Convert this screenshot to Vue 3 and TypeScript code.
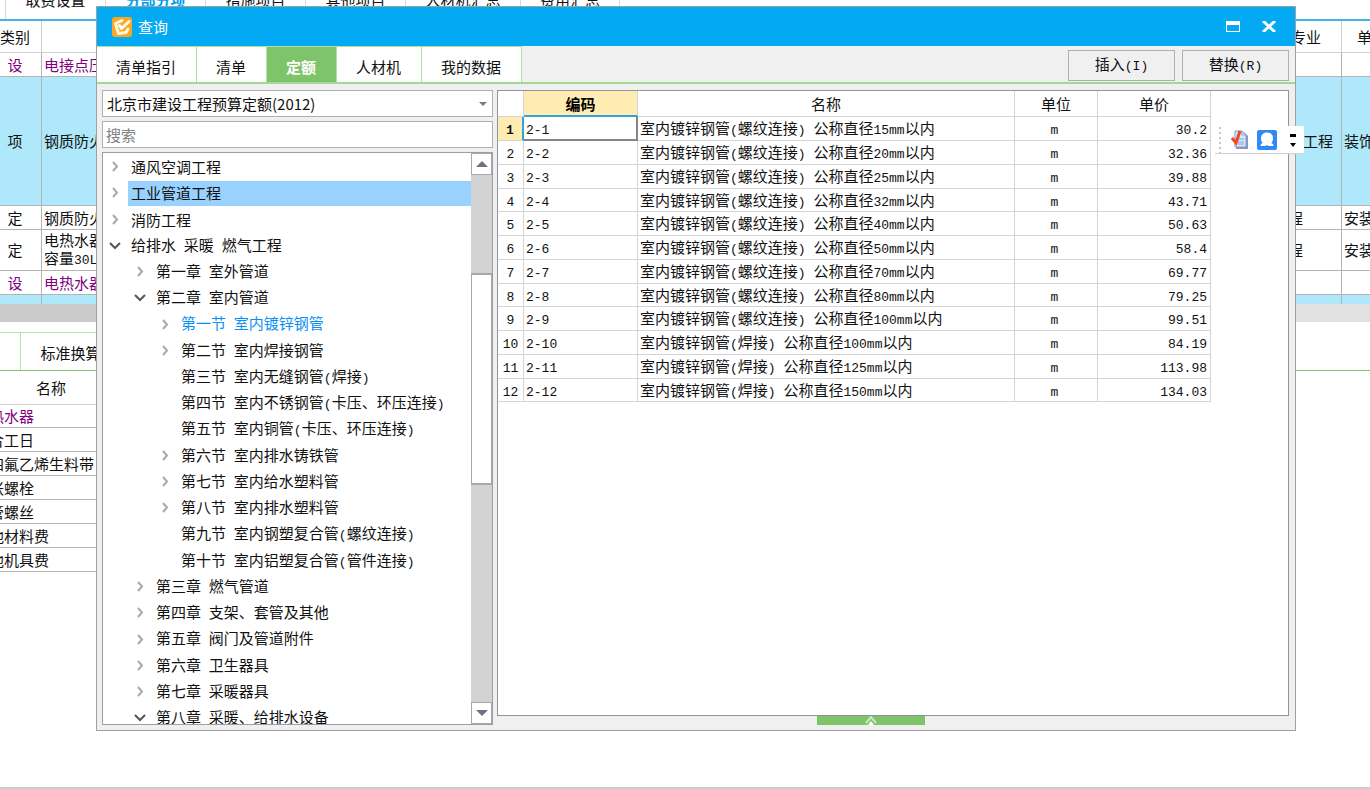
<script setup lang="ts">
import { h, ref } from 'vue'

interface TreeNode {
  label: string
  level: number
  state: 'closed' | 'open' | 'leaf'
}

interface QuotaRow {
  code: string
  name: string
  unit: string
  price: string
}

/* Sets half-width characters in a narrower monospace face than the Chinese text. */
const Mixed = (props: { text: string }) =>
  (props.text.match(/[\x20-\x7e]+|[^\x20-\x7e]+/g) ?? []).map((part) =>
    /[\x20-\x7e]/.test(part) ? h('span', { class: 'half' }, part) : part,
  )
Mixed.props = ['text']

const pageTabs = ['取费设置', '分部分项', '措施项目', '其他项目', '人材机汇总', '费用汇总']
const tabs = ['清单指引', '清单', '定额', '人材机', '我的数据']
const activeTab = ref('定额')
const keyword = ref('')
const library = ref('北京市建设工程预算定额(2012)')
const selectedNode = ref('工业管道工程')
const currentRow = ref(0)

const backRows = [
  { kind: '设', name: '电接点压', major: '', unit: '', cls: 'r24 purple' },
  { kind: '项', name: '钢质防火', major: '工程', unit: '装饰', cls: 'r129 blue' },
  { kind: '定', name: '钢质防火', major: '程', unit: '安装', cls: 'r24 short' },
  { kind: '定', name: '电热水器\n容量30L', major: '程', unit: '安装', cls: 'r41 short' },
  { kind: '设', name: '电热水器', major: '', unit: '', cls: 'r24 purple' },
  { kind: '', name: '', major: '', unit: '', cls: 'r9 blue' },
]

const materials = ['热水器', '合工日', '四氟乙烯生料带', '胀螺栓', '管螺丝', '他材料费', '他机具费']

const nodes: TreeNode[] = [
  { label: '通风空调工程', level: 0, state: 'closed' },
  { label: '工业管道工程', level: 0, state: 'closed' },
  { label: '消防工程', level: 0, state: 'closed' },
  { label: '给排水 采暖 燃气工程', level: 0, state: 'open' },
  { label: '第一章 室外管道', level: 1, state: 'closed' },
  { label: '第二章 室内管道', level: 1, state: 'open' },
  { label: '第一节 室内镀锌钢管', level: 2, state: 'closed' },
  { label: '第二节 室内焊接钢管', level: 2, state: 'closed' },
  { label: '第三节 室内无缝钢管(焊接)', level: 2, state: 'leaf' },
  { label: '第四节 室内不锈钢管(卡压、环压连接)', level: 2, state: 'leaf' },
  { label: '第五节 室内铜管(卡压、环压连接)', level: 2, state: 'leaf' },
  { label: '第六节 室内排水铸铁管', level: 2, state: 'closed' },
  { label: '第七节 室内给水塑料管', level: 2, state: 'closed' },
  { label: '第八节 室内排水塑料管', level: 2, state: 'closed' },
  { label: '第九节 室内钢塑复合管(螺纹连接)', level: 2, state: 'leaf' },
  { label: '第十节 室内铝塑复合管(管件连接)', level: 2, state: 'leaf' },
  { label: '第三章 燃气管道', level: 1, state: 'closed' },
  { label: '第四章 支架、套管及其他', level: 1, state: 'closed' },
  { label: '第五章 阀门及管道附件', level: 1, state: 'closed' },
  { label: '第六章 卫生器具', level: 1, state: 'closed' },
  { label: '第七章 采暖器具', level: 1, state: 'closed' },
  { label: '第八章 采暖、给排水设备', level: 1, state: 'open' },
]

const threaded = [
  ['15', '30.2'], ['20', '32.36'], ['25', '39.88'], ['32', '43.71'], ['40', '50.63'],
  ['50', '58.4'], ['70', '69.77'], ['80', '79.25'], ['100', '99.51'],
]
const welded = [['100', '84.19'], ['125', '113.98'], ['150', '134.03']]

const rows: QuotaRow[] = [
  ...threaded.map(([d, price]) => ({ name: `室内镀锌钢管(螺纹连接) 公称直径${d}mm以内`, price })),
  ...welded.map(([d, price]) => ({ name: `室内镀锌钢管(焊接) 公称直径${d}mm以内`, price })),
].map((row, i) => ({ code: `2-${i + 1}`, unit: 'm', ...row }))
</script>

<template>
  <div class="page">
    <nav class="page-tabs">
      <button v-for="t in pageTabs" :key="t" type="button" :class="{ on: t === '分部分项' }">{{ t }}</button>
    </nav>

    <table class="back-table">
      <colgroup>
        <col class="c-kind" /><col /><col class="c-major" /><col class="c-unit" />
      </colgroup>
      <thead>
        <tr><th class="kind">类别</th><th></th><th class="major">专业</th><th class="unit">单</th></tr>
      </thead>
      <tbody>
        <tr v-for="(r, i) in backRows" :key="i" :class="r.cls">
          <td class="kind">{{ r.kind }}</td>
          <td class="name"><Mixed :text="r.name" /></td>
          <td class="major">{{ r.major }}</td>
          <td class="unit">{{ r.unit }}</td>
        </tr>
      </tbody>
    </table>
    <div class="splitter"><div class="splitter-left"></div></div>

    <div class="sub-tabs"><div class="sub-left"><button type="button">标准换算</button></div></div>
    <table class="materials">
      <thead><tr><th>名称</th></tr></thead>
      <tbody>
        <tr v-for="(m, i) in materials" :key="m" :class="{ purple: i === 0 }"><td>{{ m }}</td></tr>
      </tbody>
    </table>
    <div class="page-foot"></div>

    <section class="dialog" role="dialog" aria-label="查询">
      <header class="title-bar">
        <svg class="logo" viewBox="0 0 20 20" aria-hidden="true">
          <rect width="20" height="20" rx="3" fill="#f9a825" />
          <path d="M10 3.500 3.500 6.500 6.500 16.500 14 15.500 16 12" fill="none" stroke="#fff6e0" stroke-width="3" stroke-linejoin="round" stroke-linecap="round" />
          <path d="M8 11 17 3.500" fill="none" stroke="#f9a825" stroke-width="5" />
          <path d="M7.500 8.500 9.500 11.500 17 4.500" fill="none" stroke="#fffdf5" stroke-width="3" stroke-linejoin="round" stroke-linecap="round" />
        </svg>
        <h1>查询</h1>
        <button type="button" aria-label="最大化">
          <svg width="14" height="11" viewBox="0 0 14 11"><path d="M0 0h14v11H0zM1 4v6h12V4z" fill="#fff" fill-rule="evenodd" /></svg>
        </button>
        <button type="button" aria-label="关闭">
          <svg width="14" height="11" viewBox="0 0 14 11"><path d="M1 0 13 11M13 0 1 11" stroke="#fff" stroke-width="3" /></svg>
        </button>
      </header>

      <div class="tool-row">
        <nav class="tabs">
          <button v-for="t in tabs" :key="t" type="button" :class="{ on: t === activeTab }" @click="activeTab = t">{{ t }}</button>
        </nav>
        <div class="actions">
          <button type="button"><Mixed text="插入(I)" /></button>
          <button type="button"><Mixed text="替换(R)" /></button>
        </div>
      </div>

      <div class="body">
        <div class="left">
          <div class="library">
            <select v-model="library" aria-label="定额库">
              <option>北京市建设工程预算定额(2012)</option>
            </select>
            <svg width="8" height="4" viewBox="0 0 8 4" aria-hidden="true"><path d="M0 0h8L4 4z" fill="#777a8c" /></svg>
          </div>
          <input v-model="keyword" class="search" type="text" placeholder="搜索" aria-label="搜索" />
          <div class="tree-box">
            <ul class="tree">
              <li v-for="n in nodes" :key="n.label" :class="['lv' + n.level, n.state]">
                <svg class="arrow" width="12" height="12" viewBox="0 0 12 12" aria-hidden="true">
                  <path v-if="n.state === 'closed'" d="M4 1 8 5.500 4 10" fill="none" stroke="#a9a9a9" stroke-width="2" />
                  <path v-if="n.state === 'open'" d="M1 3 6 8 11 3" fill="none" stroke="#555" stroke-width="2" />
                </svg>
                <button
                  type="button"
                  :class="{ selected: n.label === selectedNode, link: n.label === '第一节 室内镀锌钢管' }"
                  @click="selectedNode = n.label"
                ><Mixed :text="n.label" /></button>
              </li>
            </ul>
            <div class="scrollbar">
              <button type="button" aria-label="向上滚动"><svg width="12" height="6" viewBox="0 0 12 6"><path d="M6 0 12 6H0z" fill="#6f7284" /></svg></button>
              <div class="track before"></div>
              <div class="thumb"></div>
              <div class="track after"></div>
              <button type="button" aria-label="向下滚动"><svg width="12" height="6" viewBox="0 0 12 6"><path d="M0 0h12L6 6z" fill="#6f7284" /></svg></button>
            </div>
          </div>
        </div>

        <div class="right">
          <div class="grid-box">
            <table class="grid">
              <colgroup>
                <col class="g-no" /><col class="g-code" /><col class="g-name" /><col class="g-unit" /><col class="g-price" />
              </colgroup>
              <thead>
                <tr><th></th><th class="hot">编码</th><th>名称</th><th>单位</th><th>单价</th></tr>
              </thead>
              <tbody>
                <tr v-for="(r, i) in rows" :key="r.code" :class="{ current: i === currentRow }" @click="currentRow = i">
                  <td class="no"><Mixed :text="String(i + 1)" /></td>
                  <td class="code"><Mixed :text="r.code" /></td>
                  <td><Mixed :text="r.name" /></td>
                  <td class="mid"><Mixed :text="r.unit" /></td>
                  <td class="num"><Mixed :text="r.price" /></td>
                </tr>
              </tbody>
            </table>
          </div>
          <button class="handle" type="button" aria-label="展开">
            <svg width="12" height="9" viewBox="0 0 12 9"><path d="M1 7 6 1l5 6" fill="none" stroke="#c9e8bf" stroke-width="2" /><path d="M6 5 9 9H3z" fill="#fff" /></svg>
          </button>
        </div>
      </div>
    </section>

    <div class="float-bar">
      <span class="grip"></span>
      <button type="button" aria-label="检查">
        <svg width="18" height="20" viewBox="0 0 18 20">
          <path d="M5 2h8l4 4v13H5z" fill="#8f93b8" />
          <path d="M4 1h7l4 4v12H4z" fill="#d5e8fb" stroke="#7d9fd0" />
          <path d="M11 1v4h4M7 9h6M7 12h6M7 14h6" fill="none" stroke="#7fa8dc" />
          <path d="M1 8 5 13 9 1" fill="none" stroke="#f4471c" stroke-width="3" />
        </svg>
      </button>
      <button type="button" aria-label="用户">
        <svg width="20" height="20" viewBox="0 0 20 20">
          <rect width="20" height="20" rx="2" fill="#2f8bf3" />
          <path d="M10 2.500c4 0 6 2.500 6 6 0 2-.8 3.500-1.800 4.500 1.800.5 2.300 1.500 2.300 3h-5l-1.500-1-1.500 1h-5c0-1.500.5-2.500 2.300-3C4.800 12 4 10.500 4 8.500c0-3.500 2-6 6-6z" fill="#fff" />
        </svg>
      </button>
      <button class="more" type="button" aria-label="更多">
        <svg width="6" height="14" viewBox="0 0 6 14"><path d="M0 1h6v3H0zM0 10h6l-3 4z" fill="#000" /></svg>
      </button>
    </div>
  </div>
</template>

<style>
body {
  margin: 0;
  overflow: hidden;
}
.half {
  font-family: "Liberation Mono", monospace;
  font-size: 13px;
  white-space: pre;
}
</style>

<style scoped>
.page {
  position: relative;
  display: flex;
  flex-direction: column;
  min-height: 100vh;
  overflow: hidden;
  background: #fff;
  color: #111;
  font: 15px/18px "Noto Sans CJK SC", sans-serif;
}
.page *,
.page *::before {
  box-sizing: border-box;
}
button,
select,
input {
  margin: 0;
  padding: 0;
  border: 0;
  border-radius: 0;
  background: none;
  color: inherit;
  font: inherit;
}
button svg {
  display: block;
}
table {
  border-collapse: separate;
  border-spacing: 0;
  table-layout: fixed;
}
th,
td {
  padding: 0;
  font-weight: 400;
  white-space: pre;
  overflow: hidden;
}

/* page behind the dialog */
.page-tabs {
  display: flex;
  height: 42px;
  margin-top: -21px;
  padding-left: 5px;
  border-bottom: 2px solid #41b6e6;
}
.page-tabs button {
  width: 100px;
  padding-top: 2px;
  border-left: 1px solid #d8d8d8;
}
.page-tabs button:nth-child(5) {
  width: 115px;
}
.page-tabs button:last-child {
  border-right: 1px solid #d8d8d8;
}
.page-tabs .on {
  color: #03a0ea;
  font-weight: 700;
}
.back-table {
  width: 100%;
}
.c-kind {
  width: 42px;
}
.c-major {
  width: 99px;
}
.c-unit {
  width: 28px;
}
.back-table th,
.back-table td {
  border-right: 1px solid #b4b4b4;
  border-bottom: 1px solid #b4b4b4;
}
.back-table tr > :last-child {
  border-right: 0;
}
.back-table th {
  height: 32px;
  border-color: #d0d0d0;
}
.back-table .kind {
  padding-right: 11px;
  text-align: center;
}
.back-table .name {
  padding-left: 2px;
}
.back-table .major {
  padding-right: 8px;
  text-align: right;
}
.back-table th.major {
  padding-right: 20px;
}
.back-table .short .major {
  padding-right: 38px;
}
.back-table .unit {
  padding-left: 2px;
}
.back-table th.unit {
  padding-left: 15px;
  text-align: left;
}
.r24 td {
  height: 24px;
}
.r41 td {
  height: 41px;
}
.r129 td {
  height: 129px;
}
.r9 td {
  height: 9px;
  border-bottom: 0;
}
.blue td {
  background: #aee8fa;
}
.purple td {
  color: #800080;
}
.splitter {
  height: 18px;
  background: #e1e1e1;
}
.splitter-left {
  width: 97px;
  height: 100%;
  background: #cbcbcb;
}
.sub-tabs {
  height: 49px;
  padding-top: 10px;
  border-bottom: 1px solid #7cc96c;
}
.sub-left {
  width: 97px;
  height: 100%;
  padding-left: 20px;
  overflow: hidden;
  border-top: 1px solid #b5e3a8;
}
.sub-left button {
  width: 100px;
  height: 100%;
  padding-top: 2px;
  border-left: 1px solid #b5e3a8;
}
.materials {
  width: 97px;
}
.materials th {
  height: 34px;
  padding-left: 5px;
  border-bottom: 1px solid #d0d0d0;
}
.materials td {
  height: 24px;
  border-bottom: 1px solid #b4b4b4;
  text-indent: -11px;
}
.materials tr:first-child td {
  height: 23px;
}
.page-foot {
  height: 2px;
  margin-top: auto;
  background: #ccc;
}

/* dialog window */
.dialog {
  position: absolute;
  inset: 6px 74px 58px 96px;
  display: flex;
  flex-direction: column;
  border: 1px solid #a0a0a0;
  background: #f0f0f0;
}
.title-bar {
  display: flex;
  align-items: center;
  height: 39px;
  padding: 0 8px 0 15px;
  background: #03a9f2;
  color: #fff;
}
.logo {
  width: 20px;
  height: 20px;
}
.title-bar h1 {
  flex: 1;
  margin: 0 0 0 6px;
  font-size: 15px;
  font-weight: 400;
}
.title-bar button {
  display: flex;
  align-items: center;
  justify-content: center;
  width: 36px;
  height: 39px;
}
.tool-row {
  display: flex;
  justify-content: space-between;
  height: 38px;
  border-bottom: 2px solid #a2d893;
}
.tabs {
  display: flex;
}
.tabs button {
  padding: 5px 20px 0 19px;
  border-top: 1px solid #b0e0a3;
  border-right: 1px solid #b0e0a3;
  background: #fff;
}
.tabs .on {
  background: #7fc36a;
  color: #fff;
  font-weight: 700;
}
.actions {
  display: flex;
  gap: 7px;
  padding: 4px 6px 0 0;
}
.actions button {
  width: 107px;
  height: 31px;
  border: 1px solid #b0b0b0;
}
.body {
  display: flex;
  flex: 1;
  gap: 4px;
  min-height: 0;
  padding: 6px 6px 5px 5px;
}
.left {
  display: flex;
  flex-direction: column;
  gap: 4px;
  width: 391px;
}
.library {
  position: relative;
}
.library select {
  display: block;
  width: 100%;
  height: 27px;
  padding-left: 4px;
  border: 1px solid #b0b0b0;
  background: #fff;
  appearance: none;
}
.library svg {
  position: absolute;
  top: 12px;
  right: 6px;
  pointer-events: none;
}
.search {
  width: 100%;
  height: 27px;
  padding-left: 3px;
  border: 1px solid #b0b0b0;
  background: #fff;
}
.search::placeholder {
  color: #808080;
  opacity: 1;
}
.tree-box {
  display: flex;
  flex: 1;
  min-height: 0;
  overflow: hidden;
  border: 1px solid #9a9ea8;
  background: #fff;
}
.tree {
  flex: 1;
  margin: 0;
  padding: 1px 0 0;
  list-style: none;
}
.tree li {
  display: flex;
  align-items: center;
  height: 26px;
  padding-left: 6px;
}
.tree li:nth-child(4n + 3) {
  height: 27px;
}
.tree .lv1 {
  padding-left: 31px;
}
.tree .lv2 {
  padding-left: 56px;
}
.arrow {
  margin-right: 7px;
}
.tree button {
  flex: 1;
  height: 25px;
  padding-left: 3px;
  text-align: left;
  white-space: nowrap;
}
.tree .selected {
  background: #99d1ff;
}
.tree .link {
  color: #0a90f5;
}
.scrollbar {
  display: flex;
  flex-direction: column;
  width: 21px;
}
.scrollbar button {
  display: flex;
  align-items: center;
  justify-content: center;
  height: 22px;
  border: 1px solid #a8a8a8;
  background: #fff;
}
.track {
  background: #d3d3d3;
}
.before {
  flex: 99;
}
.thumb {
  flex: 209;
  border: 1px solid #a8a8a8;
  border-top-width: 2px;
  border-bottom-width: 2px;
}
.after {
  flex: 218;
}
.right {
  display: flex;
  flex: 1;
  flex-direction: column;
  min-width: 0;
}
.grid-box {
  flex: 1;
  overflow: hidden;
  border: 1px solid #8f949e;
  background: #fff;
}
.grid {
  width: 713px;
}
.g-no {
  width: 26px;
}
.g-code {
  width: 114px;
}
.g-name {
  width: 377px;
}
.g-unit {
  width: 83px;
}
.g-price {
  width: 113px;
}
.grid th,
.grid td {
  height: 24px;
  padding: 2px 0 0 2px;
  border-right: 1px solid #d4d4d4;
  border-bottom: 1px solid #d4d4d4;
  line-height: 16px;
}
.grid th {
  height: 26px;
  padding: 1px 0 0;
}
.grid tr:nth-child(4n) td {
  height: 23px;
}
.grid th.hot {
  border-bottom: 2px solid #2fa5d6;
  background: #ffecb3;
  color: #000;
  font-weight: 700;
}
.grid .no,
.grid .mid {
  padding-left: 0;
  text-align: center;
}
.grid .mid {
  padding-right: 3px;
}
.grid .num {
  padding-right: 3px;
  text-align: right;
}
.grid .current .no {
  border-right: 2px solid #2fa5d6;
  background: #ffecb3;
  font-weight: 700;
}
.grid .current .code {
  border-right: 2px solid #858585;
  border-bottom: 2px solid #858585;
}
.handle {
  display: flex;
  justify-content: center;
  width: 108px;
  height: 9px;
  margin-left: 320px;
  background: #7fc36a;
}

/* floating toolbar that lies over the dialog edge */
.float-bar {
  position: absolute;
  top: 126px;
  right: 66px;
  display: flex;
  align-items: center;
  height: 28px;
  padding: 0 8px 0 4px;
  border-bottom: 1px solid #d0d0d0;
  background: #fff;
}
.grip {
  width: 2px;
  height: 26px;
  margin-right: 10px;
  background: repeating-linear-gradient(#c4c4c4 0 2px, #fff 2px 5px);
}
.float-bar button + button {
  margin-left: 8px;
}
.float-bar button.more {
  margin-left: 13px;
}
</style>
